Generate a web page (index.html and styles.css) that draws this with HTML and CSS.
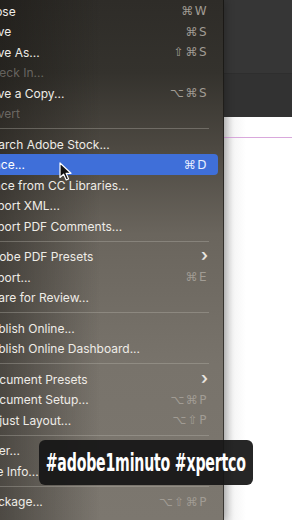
FILE: index.html
```html
<!DOCTYPE html>
<html lang="en">
<head>
  <meta charset="UTF-8">
  <title>File menu</title>
  <link rel="stylesheet" href="styles.css">
</head>
<body>

<div class="screen">

  <!-- File menu -->
  <div class="menu">
    <div class="item"><span class="label">Close</span><span class="keys">⌘W</span></div>
    <div class="item"><span class="label">Save</span><span class="keys">⌘S</span></div>
    <div class="item"><span class="label">Save As...</span><span class="keys">⇧⌘S</span></div>
    <div class="item off"><span class="label">Check In...</span></div>
    <div class="item"><span class="label">Save a Copy...</span><span class="keys">⌥⌘S</span></div>
    <div class="item off"><span class="label">Revert</span></div>
    <div class="sep"></div>
    <div class="item"><span class="label">Search Adobe Stock...</span></div>
    <div class="item active"><span class="label">Place...</span><span class="keys">⌘D</span></div>
    <div class="item"><span class="label">Place from CC Libraries...</span></div>
    <div class="item"><span class="label">Import XML...</span></div>
    <div class="item"><span class="label">Import PDF Comments...</span></div>
    <div class="sep"></div>
    <div class="item"><span class="label">Adobe PDF Presets</span><span class="arrow">›</span></div>
    <div class="item"><span class="label">Export...</span><span class="keys">⌘E</span></div>
    <div class="item"><span class="label">Share for Review...</span></div>
    <div class="sep"></div>
    <div class="item"><span class="label">Publish Online...</span></div>
    <div class="item"><span class="label">Publish Online Dashboard...</span></div>
    <div class="sep"></div>
    <div class="item"><span class="label">Document Presets</span><span class="arrow">›</span></div>
    <div class="item"><span class="label">Document Setup...</span><span class="keys">⌥⌘P</span></div>
    <div class="item"><span class="label">Adjust Layout...</span><span class="keys">⌥⇧P</span></div>
    <div class="sep"></div>
    <div class="item"><span class="label">User...</span></div>
    <div class="item"><span class="label">File Info...</span></div>
    <div class="sep"></div>
    <div class="item"><span class="label">Package...</span><span class="keys">⌥⇧⌘P</span></div>
  </div>

  <!-- document window behind the menu -->
  <div class="app">
    <div class="app-bar"></div>
    <div class="app-bar lower"></div>
    <div class="page">
      <div class="margin-line"></div>
    </div>
  </div>

  <!-- mouse pointer -->
  <svg class="pointer" width="14" height="20" viewBox="0 0 14 20">
    <path d="M1 1 L1 15.5 L4.6 12.2 L7.2 18 L9.6 17 L7.1 11.3 L12 11.3 Z" fill="#111" stroke="#fff" stroke-width="1.2" stroke-linejoin="round"/>
  </svg>

  <!-- video caption -->
  <div class="caption"><span>#adobe1minuto #xpertco</span></div>

</div>

</body>
</html>
```

FILE: styles.css
```css
* {
  box-sizing: border-box;
}
body {
  margin: 0;
  background: #fff;
  font-family: 'Inter', 'Liberation Sans', sans-serif;
}
.screen {
  position: relative;
  width: 292px;
  height: 520px;
  overflow: hidden;
  display: flex;
}
.menu {
  width: 224px;
  flex-shrink: 0;
  padding-top: 0.75px;
  overflow: hidden;
  background:
    linear-gradient(to right, rgba(20,18,15,0.45), rgba(20,18,15,0) 45%),
    linear-gradient(to bottom, #2e2c28 0%, #34322d 14%, #4c4841 28%, #6a655d 45%, #78736b 70%, #7c776f 100%);
  border-right: 1px solid rgba(0,0,0,0.25);
  box-shadow: 2px 0 8px rgba(0,0,0,0.25);
  z-index: 1;
}
.item {
  height: 20.5px;
  display: flex;
  align-items: center;
  padding-right: 15px;
  color: #efece7;
  font-size: 12px;
  white-space: nowrap;
}
.item .label {
  flex: 1;
  margin-left: -16.5px;
}
.item.off {
  color: rgba(236,233,228,0.32);
}
.item.active {
  margin-right: 5px;
  padding-right: 10px;
  background: #3f6fd9;
  border-radius: 0 4px 4px 0;
  color: #fff;
}
.keys {
  font-family: 'DejaVu Sans', sans-serif;
  font-size: 12px;
  letter-spacing: 1.5px;
  color: #a19c94;
}
.item.active .keys {
  color: #e8eeff;
}
.arrow {
  font-size: 17px;
  font-weight: 600;
  color: #e8e5e0;
  line-height: 1;
  margin-top: -2px;
}
.sep {
  height: 10px;
  display: flex;
  align-items: center;
  padding-right: 14px;
}
.sep::after {
  content: "";
  flex: 1;
  height: 1px;
  background: rgba(190,185,178,0.35);
}
.app {
  flex: 1;
  display: flex;
  flex-direction: column;
}
.app-bar {
  height: 73px;
  background: #363636;
}
.app-bar.lower {
  height: 44px;
  background: #323232;
  border-top: 1px solid #2e2e2e;
}
.page {
  flex: 1;
  padding-top: 20px;
  background: linear-gradient(to right, #dcdcdc, #f6f6f6 10px, #fff 22px);
}
.margin-line {
  height: 1px;
  background: #d9a8dc;
}
.pointer {
  position: absolute;
  left: 59px;
  top: 162px;
  z-index: 2;
}
.caption {
  position: absolute;
  left: 39px;
  top: 440px;
  width: 214px;
  height: 45px;
  display: flex;
  align-items: center;
  justify-content: center;
  border-radius: 6px;
  background: rgba(22,22,22,0.93);
  z-index: 3;
}
.caption span {
  display: inline-block;
  white-space: nowrap;
  color: #fff;
  font-family: 'DejaVu Sans Condensed', 'DejaVu Sans', sans-serif;
  font-weight: bold;
  font-size: 24px;
  letter-spacing: -0.3px;
  transform: scaleX(0.655);
}
```
